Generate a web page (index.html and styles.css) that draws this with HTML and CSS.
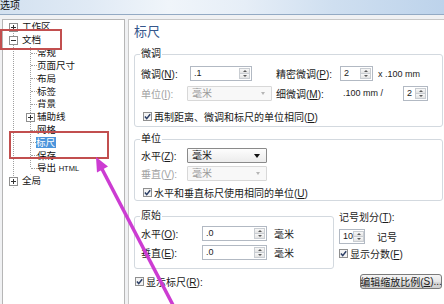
FILE: index.html
```html
<!DOCTYPE html>
<html lang="zh-CN">
<head>
<meta charset="utf-8">
<title>选项</title>
<link rel="stylesheet" href="styles.css">
</head>
<body>
<div class="titlebar"><span class="title">选项</span></div>
<div class="main">
  <div class="tree">
    <div class="root">
      <div class="node first"><svg class="exp" width="9" height="9" viewBox="0 0 9 9"><rect x="0.5" y="0.5" width="8" height="8" fill="#fff" stroke="#8f8f8f"/><path d="M2 4.5h5M4.5 2v5" stroke="#333"/></svg><span class="label">工作区</span></div>
      <div class="node"><svg class="exp" width="9" height="9" viewBox="0 0 9 9"><rect x="0.5" y="0.5" width="8" height="8" fill="#fff" stroke="#8f8f8f"/><path d="M2 4.5h5" stroke="#333"/></svg><span class="label">文档</span></div>
      <div class="children">
        <div class="leaf"><span class="seg"></span><span class="label">常规</span></div>
        <div class="leaf"><span class="seg"></span><span class="label">页面尺寸</span></div>
        <div class="leaf"><span class="seg"></span><span class="label">布局</span></div>
        <div class="leaf"><span class="seg"></span><span class="label">标签</span></div>
        <div class="leaf"><span class="seg"></span><span class="label">背景</span></div>
        <div class="leaf"><svg class="exp sub" width="9" height="9" viewBox="0 0 9 9"><rect x="0.5" y="0.5" width="8" height="8" fill="#fff" stroke="#8f8f8f"/><path d="M2 4.5h5M4.5 2v5" stroke="#333"/></svg><span class="label">辅助线</span></div>
        <div class="leaf"><span class="seg"></span><span class="label">网格</span></div>
        <div class="leaf sel"><span class="seg"></span><span class="label">标尺</span></div>
        <div class="leaf"><span class="seg"></span><span class="label">保存</span></div>
        <div class="leaf last"><span class="seg"></span><span class="label">导出 <span class="latin">HTML</span></span></div>
      </div>
      <div class="node last"><svg class="exp" width="9" height="9" viewBox="0 0 9 9"><rect x="0.5" y="0.5" width="8" height="8" fill="#fff" stroke="#8f8f8f"/><path d="M2 4.5h5M4.5 2v5" stroke="#333"/></svg><span class="label">全局</span></div>
    </div>
  </div>

  <div class="panel">
    <div class="heading">标尺</div>

    <fieldset class="group g1">
      <legend>微调</legend>
      <div class="row h15">
        <span class="lbl w49">微调(<u>N</u>):</span>
        <span class="spin w62"><span class="val">.1</span><span class="btns"><i class="up"></i><i class="dn"></i></span></span>
        <span class="lbl w64 ml24">精密微调(<u>P</u>):</span>
        <span class="spin w33"><span class="val">2</span><span class="btns"><i class="up"></i><i class="dn"></i></span></span>
        <span class="unit ml5">x .100 mm</span>
      </div>
      <div class="row h14 mt5">
        <span class="lbl w46 dim">单位(<u>I</u>):</span>
        <span class="select dis w85"><span>毫米</span><span class="arrow"></span></span>
        <span class="lbl w67 ml4">细微调(<u>M</u>):</span>
        <span class="unit w60">.100 mm /</span>
        <span class="spin w25"><span class="val">2</span><span class="btns"><i class="up"></i><i class="dn"></i></span></span>
      </div>
      <div class="row h14 mt9">
        <svg class="cb" width="9" height="9" viewBox="0 0 9 9"><rect x="0.5" y="0.5" width="8" height="8" fill="#f3f3f3" stroke="#8f8f8f"/><path d="M1.9 4.6 3.7 6.6 7.2 2.2" fill="none" stroke="#2c3f66" stroke-width="1.5"/></svg>
        <span class="cbtext">再制距离、微调和标尺的单位相同(<u>D</u>)</span>
      </div>
    </fieldset>

    <fieldset class="group g2">
      <legend>单位</legend>
      <div class="row h15">
        <span class="lbl w46">水平(<u>Z</u>):</span>
        <span class="select w80"><span>毫米</span><span class="arrow"></span></span>
      </div>
      <div class="row h14 mt3">
        <span class="lbl w46 dim">垂直(<u>V</u>):</span>
        <span class="select dis w80"><span>毫米</span><span class="arrow"></span></span>
      </div>
      <div class="row h14 mt5">
        <svg class="cb" width="9" height="9" viewBox="0 0 9 9"><rect x="0.5" y="0.5" width="8" height="8" fill="#f3f3f3" stroke="#8f8f8f"/><path d="M1.9 4.6 3.7 6.6 7.2 2.2" fill="none" stroke="#2c3f66" stroke-width="1.5"/></svg>
        <span class="cbtext">水平和垂直标尺使用相同的单位(<u>U</u>)</span>
      </div>
    </fieldset>

    <div class="origin-row">
      <fieldset class="group g3">
        <legend>原始</legend>
        <div class="row h15">
          <span class="lbl w61">水平(<u>O</u>):</span>
          <span class="spin w65"><span class="val">.0</span><span class="btns"><i class="up"></i><i class="dn"></i></span></span>
          <span class="ml7">毫米</span>
        </div>
        <div class="row h15 mt4">
          <span class="lbl w61">垂直(<u>E</u>):</span>
          <span class="spin w65"><span class="val">.0</span><span class="btns"><i class="up"></i><i class="dn"></i></span></span>
          <span class="ml7">毫米</span>
        </div>
      </fieldset>
      <div class="marks">
        <div class="marks-title">记号划分(<u>T</u>):</div>
        <div class="row h14 mt5">
          <span class="spin w26"><span class="val">10</span><span class="btns"><i class="up"></i><i class="dn"></i></span></span>
          <span class="ml12">记号</span>
        </div>
        <div class="row h12 mt4">
          <svg class="cb" width="9" height="9" viewBox="0 0 9 9"><rect x="0.5" y="0.5" width="8" height="8" fill="#f3f3f3" stroke="#8f8f8f"/><path d="M1.9 4.6 3.7 6.6 7.2 2.2" fill="none" stroke="#2c3f66" stroke-width="1.5"/></svg>
          <span class="cbtext2">显示分数(<u>F</u>)</span>
        </div>
      </div>
    </div>

    <div class="footer">
      <svg class="cb" width="9" height="9" viewBox="0 0 9 9"><rect x="0.5" y="0.5" width="8" height="8" fill="#f3f3f3" stroke="#8f8f8f"/><path d="M1.9 4.6 3.7 6.6 7.2 2.2" fill="none" stroke="#2c3f66" stroke-width="1.5"/></svg>
      <span class="cbtext">显示标尺(<u>R</u>):</span>
      <span class="btn">编辑缩放比例(<u>S</u>)...</span>
    </div>
  </div>
</div>

<svg class="annot" width="444" height="304" viewBox="0 0 444 304">
  <rect x="1" y="30" width="60" height="19" fill="none" stroke="#c24f4f" stroke-width="2"/>
  <rect x="10" y="132" width="98" height="26" fill="none" stroke="#c24f4f" stroke-width="2"/>
  <line x1="102" y1="169" x2="174" y2="307" stroke="#cc3cd2" stroke-width="3.5"/>
  <polygon points="96,157 108,166.6 97,172.5" fill="#cc3cd2"/>
</svg>
</body>
</html>
```

FILE: styles.css
```css
* { box-sizing: border-box; }
html, body { margin: 0; padding: 0; }
body {
  width: 444px;
  height: 304px;
  overflow: hidden;
  position: relative;
  background: #f0f1f3;
  font-family: "Liberation Sans", "Noto Sans CJK SC", sans-serif;
  font-size: 10px;
  color: #1b1b1b;
}

/* title bar */
.titlebar {
  height: 15px;
  overflow: hidden;
  background: linear-gradient(to right, #d3e1f0 0%, #e0eaf5 20%, #f0f5fa 38%, #e6eef7 55%, #cfdff0 75%, #bdd3eb 100%);
  border-bottom: 1px solid #93aac4;
}
.title { display: block; line-height: 11px; font-size: 10px; color: #111; }

.main { display: flex; height: 290px; padding-top: 4px; }

/* tree */
.tree {
  margin-left: 2px;
  width: 123px;
  height: 300px;
  background: #fff;
  border: 1px solid #b6b6b6;
  padding-top: 1px;
  font-size: 9.5px;
  color: #111;
}
.root { margin-left: 10px; border-left: 1px dotted #a0a0a0; }
.node, .leaf { display: flex; align-items: center; height: 12.83px; }
.node .exp { margin-left: -5px; flex: none; }
.node .label { margin-left: 4px; line-height: 12px; }
.node.first { margin-left: -1px; padding-left: 1px; background: linear-gradient(#fff, #fff) no-repeat 0 0 / 1px 50%; }
.node.last { margin-left: -1px; padding-left: 1px; background: linear-gradient(#fff, #fff) no-repeat 0 100% / 1px 50%; }
.children { margin-left: 16px; border-left: 1px dotted #a0a0a0; }
.leaf .seg { width: 6px; flex: none; border-top: 1px dotted #a0a0a0; }
.leaf .exp.sub { margin-left: -5px; flex: none; }
.leaf .exp.sub + .label { margin-left: 2px; }
.leaf .label { line-height: 12px; }
.leaf.sel .seg { width: 5px; }
.leaf.sel .label { background: #4b95dc; color: #fff; line-height: 11px; padding: 0 1px 0 0; }
.leaf.last { margin-left: -1px; padding-left: 1px; background: linear-gradient(#fff, #fff) no-repeat 0 100% / 1px 50%; }
.latin { font-size: 7.5px; }

/* right panel */
.panel {
  margin-left: 3px;
  flex: 1;
  background: #fff;
  border-left: 1px solid #c8c8c8;
  border-top: 1px solid #c8c8c8;
  padding: 4px 1px 0 5px;
}
.heading { font-size: 13px; line-height: 16px; color: #34568c; }

.group {
  margin: 0;
  padding: 6px 6px 3px;
  border: 1px solid #d3d9df;
  border-radius: 3px;
  min-width: 0;
}
.group legend { padding: 0 1px; margin-left: -1px; line-height: 12px; font-size: 10px; }
.g1 { margin-top: 8px; }
.g2 { margin-top: 6px; padding-top: 3px; padding-bottom: 1px; }
.origin-row { display: flex; align-items: flex-start; margin-top: 9px; }
.g3 { width: 200px; padding-top: 4px; padding-bottom: 8px; }

.row { display: flex; align-items: center; }
.h15 { height: 15px; }
.h14 { height: 14px; }
.h12 { height: 12px; }
.mt3 { margin-top: 3px; }
.mt4 { margin-top: 4px; }
.mt5 { margin-top: 5px; }
.mt9 { margin-top: 9px; }
.ml4 { margin-left: 4px; }
.ml5 { margin-left: 5px; }
.ml7 { margin-left: 7px; }
.ml12 { margin-left: 12px; }
.ml24 { margin-left: 24px; }

.lbl { flex: none; white-space: nowrap; }
.w25 { width: 25px; } .w26 { width: 26px; } .w33 { width: 33px; }
.w46 { width: 46px; } .w49 { width: 49px; } .w60 { width: 60px; }
.w61 { width: 61px; } .w62 { width: 62px; } .w64 { width: 64px; }
.w65 { width: 65px; } .w67 { width: 67px; } .w80 { width: 80px; } .w85 { width: 85px; }
.dim { color: #a3a3a3; }
u { text-decoration-thickness: 1px; text-underline-offset: 1px; }

.unit { font-size: 9px; white-space: nowrap; flex: none; }

/* spin box */
.spin {
  display: flex;
  flex: none;
  height: 15px;
  border: 1px solid #b2b9c3;
  background: #fff;
}
.spin .val { flex: 1; padding-left: 3px; font-size: 9px; line-height: 13px; }
.btns { width: 12px; flex: none; display: flex; flex-direction: column; padding: 1px 1px 1px 0; }
.btns i {
  flex: 1;
  display: flex;
  align-items: center;
  justify-content: center;
  background: linear-gradient(#f8f8f8, #e3e3e3);
  border: 1px solid #c9cdd2;
}
.btns i + i { border-top: none; }
.btns i::before { content: ""; border-left: 2px solid transparent; border-right: 2px solid transparent; }
.btns .up::before { border-bottom: 2px solid #5a5a5a; }
.btns .dn::before { border-top: 2px solid #5a5a5a; }

/* select */
.select {
  display: flex;
  flex: none;
  align-items: center;
  justify-content: space-between;
  height: 15px;
  border: 1px solid #8a8a8a;
  border-radius: 1px;
  background: linear-gradient(#fdfdfd, #ececec);
  padding: 0 6px 0 4px;
  line-height: 13px;
}
.select .arrow { border-left: 3.5px solid transparent; border-right: 3.5px solid transparent; border-top: 4px solid #111; }
.select.dis { border-color: #d8d8d8; background: #f8f8f8; color: #9b9b9b; }
.select.dis .arrow { border-left-width: 2.5px; border-right-width: 2.5px; border-top: 3px solid #b5b5b5; }

/* checkbox */
.cb { flex: none; margin-left: 2px; }
.cbtext { margin-left: 2px; white-space: nowrap; }
.cbtext2 { margin-left: 2px; white-space: nowrap; }

.marks { margin-left: 5px; padding-top: 2px; }
.marks-title { line-height: 12px; white-space: nowrap; }
.marks .cb { margin-left: 0; }

.footer { display: flex; align-items: center; height: 15px; margin-top: 5px; padding-right: 1px; }
.footer .cb { margin-left: 1px; }
.btn {
  margin-left: auto;
  width: 82px;
  height: 15px;
  border: 1px solid #7a7a7a;
  border-radius: 3px;
  background: linear-gradient(#f5f5f5, #e6e6e6 50%, #d9d9d9 51%, #cfcfcf);
  display: flex;
  align-items: center;
  justify-content: center;
  white-space: nowrap;
}

/* annotation overlay */
.annot { position: absolute; left: 0; top: 0; pointer-events: none; }
```
